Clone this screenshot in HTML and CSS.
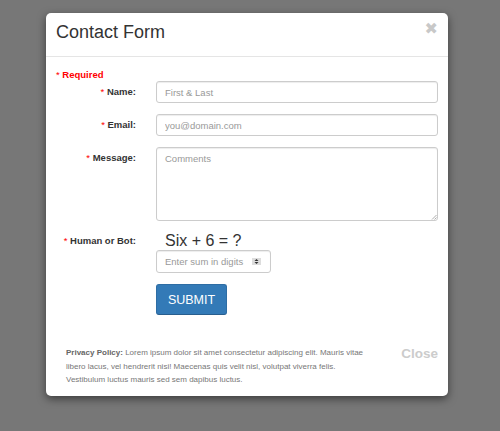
FILE: index.html
```html
<!DOCTYPE html>
<html>
<head>
<meta charset="utf-8">
<link rel="stylesheet" href="styles.css">
</head>
<body>
<div class="backdrop">
  <div class="modal">
    <div class="modal-header">
      <h1 class="title">Contact Form</h1>
      <span class="close">&#x2716;</span>
    </div>
    <div class="modal-body">
      <div class="required"><span class="star">*</span> Required</div>
      <div class="row">
        <label class="label"><span class="star">*</span> Name:</label>
        <input class="field" type="text" placeholder="First &amp; Last">
      </div>
      <div class="row">
        <label class="label"><span class="star">*</span> Email:</label>
        <input class="field" type="text" placeholder="you@domain.com">
      </div>
      <div class="row">
        <label class="label"><span class="star">*</span> Message:</label>
        <div class="area-wrap">
          <textarea class="field area" placeholder="Comments"></textarea>
          <svg class="grip" width="6" height="6" viewBox="0 0 6 6"><path d="M5.5 1 L1 5.5 M5.5 3.5 L3.5 5.5" stroke="#999" stroke-width="0.8"/></svg>
        </div>
      </div>
      <div class="row human">
        <label class="label"><span class="star">*</span> Human or Bot:</label>
        <div class="captcha">
          <div class="question">Six + 6 = ?</div>
          <div class="num">
            <input class="num-input" type="text" placeholder="Enter sum in digits">
            <span class="spin"><svg width="9" height="7" viewBox="0 0 9 7"><rect width="9" height="7" fill="#ddd"/><path d="M2.5 3 L4.5 1 L6.5 3 Z M2.5 4 L4.5 6 L6.5 4 Z" fill="#333"/></svg></span>
          </div>
          <button class="submit" type="button">SUBMIT</button>
        </div>
      </div>
    </div>
    <div class="modal-footer">
      <p class="policy"><span class="policy-title">Privacy Policy:</span> Lorem ipsum dolor sit amet consectetur adipiscing elit. Mauris vitae libero lacus, vel hendrerit nisi! Maecenas quis velit nisl, volutpat viverra felis. Vestibulum luctus mauris sed sem dapibus luctus.</p>
      <span class="close-text">Close</span>
    </div>
  </div>
</div>
</body>
</html>
```

FILE: styles.css
```css
html, body {
  margin: 0;
  padding: 0;
  width: 500px;
  height: 431px;
  overflow: hidden;
  background: #777;
  font-family: "Liberation Sans", Arial, sans-serif;
}
.backdrop {
  padding: 13px 0 0 46px;
}
.modal {
  width: 402px;
  background: #fff;
  border-radius: 5px;
  box-shadow: 0 3px 9px rgba(0,0,0,0.5);
}
.modal-header {
  height: 43px;
  border-bottom: 1px solid #e5e5e5;
  display: flex;
  justify-content: space-between;
  align-items: flex-start;
  padding: 0 10px;
}
.title {
  margin: 9px 0 0 0;
  font-size: 18px;
  font-weight: normal;
  color: #333;
  line-height: 20px;
}
.close {
  margin-top: 7px;
  margin-right: 0;
  font-size: 16px;
  color: #c8c8c8;
  font-family: "DejaVu Sans", sans-serif;
  font-weight: bold;
  line-height: 18px;
}
.modal-body {
  padding: 12px 10px 0 10px;
}
.required {
  font-size: 9.5px;
  font-weight: bold;
  color: #f00;
  line-height: 11px;
  height: 12px;
}
.star {
  color: #f00;
  font-weight: normal;
}
.row {
  display: flex;
  align-items: flex-start;
  margin-bottom: 11px;
}
.label {
  width: 80px;
  flex: none;
  text-align: right;
  font-size: 9.5px;
  font-weight: bold;
  color: #333;
  line-height: 22px;
  margin-right: 20px;
}
.field {
  flex: 1;
  box-sizing: border-box;
  height: 22px;
  border: 1px solid #ccc;
  border-radius: 3px;
  box-shadow: inset 0 1px 1px rgba(0,0,0,0.075);
  padding: 0 8px;
  font-family: "Liberation Sans", Arial, sans-serif;
  font-size: 9.5px;
  color: #555;
  outline: none;
  margin: 0;
}
.field::placeholder, .num-input::placeholder {
  color: #999;
}
.area-wrap {
  flex: 1;
  display: flex;
  position: relative;
}
.area {
  height: 74px;
  resize: none;
  padding: 5px 8px;
  line-height: 12px;
}
.grip {
  position: absolute;
  right: 1px;
  bottom: 1px;
}
.human .label {
  line-height: 14px;
  margin-top: 2px;
}
.captcha {
  display: flex;
  flex-direction: column;
  align-items: flex-start;
}
.question {
  font-size: 16px;
  color: #333;
  line-height: 17px;
  margin-left: 9px;
}
.num {
  margin-top: 1px;
  box-sizing: border-box;
  width: 115px;
  height: 23px;
  border: 1px solid #ccc;
  border-radius: 3px;
  box-shadow: inset 0 1px 1px rgba(0,0,0,0.075);
  display: flex;
  align-items: center;
  padding: 0 9px 0 8px;
}
.num-input {
  border: none;
  outline: none;
  padding: 0;
  margin: 0;
  width: 80px;
  flex: 1;
  font-family: "Liberation Sans", Arial, sans-serif;
  font-size: 9.5px;
  background: transparent;
}
.spin {
  display: flex;
}
.submit {
  margin-top: 11px;
  width: 71px;
  height: 31px;
  background: #337ab7;
  border: 1px solid #2e6da4;
  border-bottom-color: #285e8e;
  border-radius: 3px;
  color: #fff;
  font-family: "Liberation Sans", Arial, sans-serif;
  font-size: 12.5px;
  padding: 0;
}
.modal-footer {
  display: flex;
  justify-content: space-between;
  align-items: flex-start;
  padding: 20px 10px 9px 20px;
}
.policy {
  margin: 0;
  width: 305px;
  font-size: 8px;
  line-height: 13.5px;
  color: #777;
}
.policy-title {
  font-weight: bold;
  color: #666;
}
.close-text {
  font-size: 13.5px;
  font-weight: bold;
  color: #ccc;
  line-height: 14px;
  margin-top: 1px;
}
```
